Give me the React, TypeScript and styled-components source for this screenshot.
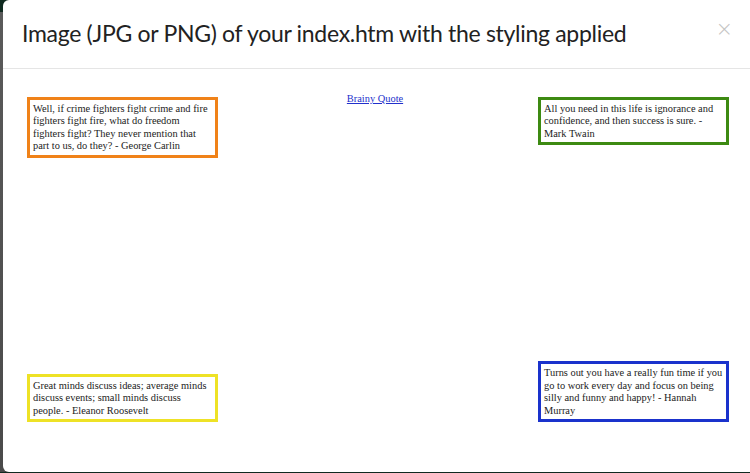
import styled, { createGlobalStyle } from "styled-components";

const GlobalStyle = createGlobalStyle`
  html, body {
    margin: 0;
    padding: 0;
    overflow: hidden;
    background: linear-gradient(#0f2a20 0, #0f2a20 12px, #5a5a5a 12px, #4a4a4a 100%);
  }
`;

const quotes = [
  {
    text: "Well, if crime fighters fight crime and fire fighters fight fire, what do freedom fighters fight? They never mention that part to us, do they? - George Carlin",
    color: "#f08218",
    area: "tl",
  },
  {
    text: "All you need in this life is ignorance and confidence, and then success is sure. - Mark Twain",
    color: "#3d8a12",
    area: "tr",
  },
  {
    text: "Great minds discuss ideas; average minds discuss events; small minds discuss people. - Eleanor Roosevelt",
    color: "#eee226",
    area: "bl",
  },
  {
    text: "Turns out you have a really fun time if you go to work every day and focus on being silly and funny and happy! - Hannah Murray",
    color: "#1a32cc",
    area: "br",
  },
];

export default function App() {
  return (
    <>
      <GlobalStyle />
      <Modal>
        <Header>
          <Title>Image (JPG or PNG) of your index.htm with the styling applied</Title>
          <Close>×</Close>
        </Header>
        <Body>
          <Shot>
            <Link href="#">Brainy Quote</Link>
            {quotes.map((q) => (
              <Quote key={q.area} $color={q.color} $area={q.area}>
                {q.text}
              </Quote>
            ))}
          </Shot>
        </Body>
      </Modal>
    </>
  );
}

const Modal = styled.div`
  margin-left: 3px;
  width: 760px;
  height: 472px;
  background: #fff;
  border-radius: 6px;
  overflow: hidden;
`;

const Header = styled.div`
  height: 69px;
  display: flex;
  align-items: center;
  justify-content: space-between;
  padding: 0 30px 3px 19px;
  border-bottom: 1px solid #e5e5e5;
  box-sizing: border-box;
`;

const Title = styled.h4`
  margin: 0;
  font-family: Lato, "Open Sans", sans-serif;
  font-size: 23px;
  font-weight: 400;
  color: #222;
  letter-spacing: -0.3px;
`;

const Close = styled.span`
  font-family: "DejaVu Sans", sans-serif;
  font-size: 21px;
  font-weight: 300;
  color: #c4c4c4;
  line-height: 1;
  margin-top: -6px;
`;

const Body = styled.div`
  padding: 28px 0 0 24px;
`;

const Shot = styled.div`
  width: 702px;
  height: 325px;
  display: grid;
  grid-template-columns: 191px 1fr 191px;
  grid-template-rows: auto 1fr auto;
  grid-template-areas:
    "tl link tr"
    ". . ."
    "bl . br";
  font-family: "Liberation Serif", "Times New Roman", serif;
`;

const Link = styled.a`
  grid-area: link;
  justify-self: center;
  margin: -4px 6px 0 0;
  font-size: 10.4px;
  color: #2230cc;
  text-decoration: underline;
`;

const Quote = styled.div<{ $color: string; $area: string }>`
  grid-area: ${(p) => p.$area};
  align-self: ${(p) => (p.$area.startsWith("b") ? "end" : "start")};
  border: 3px solid ${(p) => p.$color};
  padding: 3px 3px 2px 3px;
  font-size: 10.4px;
  line-height: 12.4px;
  color: #222;
`;
